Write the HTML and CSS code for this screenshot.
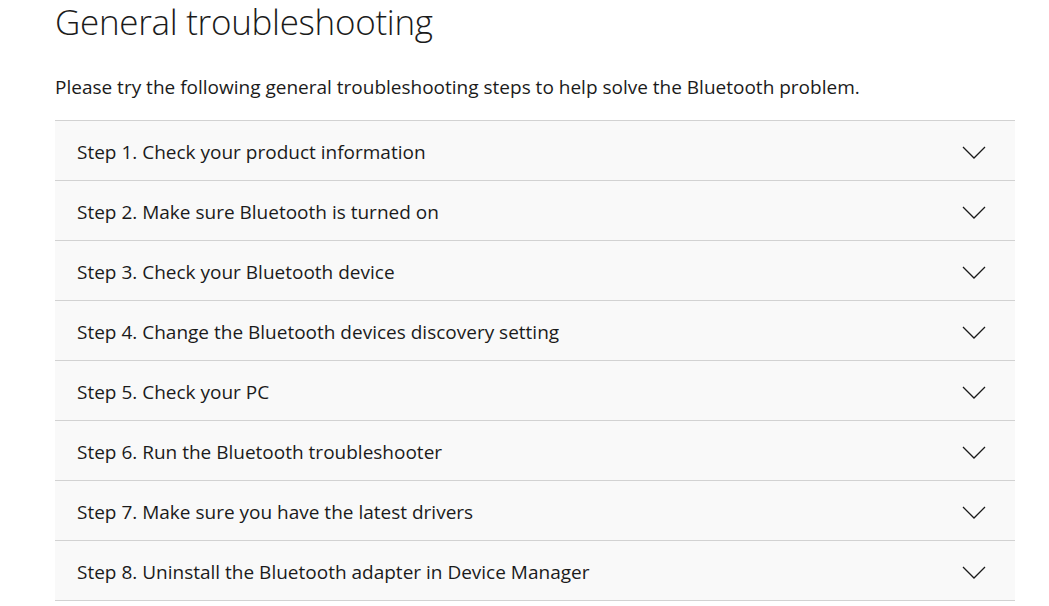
FILE: index.html
```html
<!DOCTYPE html>
<html>
<head>
<meta charset="utf-8">
<link rel="stylesheet" href="styles.css">
</head>
<body>
<main class="page">
  <h1 class="title">General troubleshooting</h1>
  <p class="intro">Please try the following general troubleshooting steps to help solve the Bluetooth problem.</p>
  <ul class="steps">
    <li class="step"><span class="label">Step 1. Check your product information</span><svg class="chev" viewBox="0 0 24 14"><path d="M1 1 L12 12 L23 1"/></svg></li>
    <li class="step"><span class="label">Step 2. Make sure Bluetooth is turned on</span><svg class="chev" viewBox="0 0 24 14"><path d="M1 1 L12 12 L23 1"/></svg></li>
    <li class="step"><span class="label">Step 3. Check your Bluetooth device</span><svg class="chev" viewBox="0 0 24 14"><path d="M1 1 L12 12 L23 1"/></svg></li>
    <li class="step"><span class="label">Step 4. Change the Bluetooth devices discovery setting</span><svg class="chev" viewBox="0 0 24 14"><path d="M1 1 L12 12 L23 1"/></svg></li>
    <li class="step"><span class="label">Step 5. Check your PC</span><svg class="chev" viewBox="0 0 24 14"><path d="M1 1 L12 12 L23 1"/></svg></li>
    <li class="step"><span class="label">Step 6. Run the Bluetooth troubleshooter</span><svg class="chev" viewBox="0 0 24 14"><path d="M1 1 L12 12 L23 1"/></svg></li>
    <li class="step"><span class="label">Step 7. Make sure you have the latest drivers</span><svg class="chev" viewBox="0 0 24 14"><path d="M1 1 L12 12 L23 1"/></svg></li>
    <li class="step"><span class="label">Step 8. Uninstall the Bluetooth adapter in Device Manager</span><svg class="chev" viewBox="0 0 24 14"><path d="M1 1 L12 12 L23 1"/></svg></li>
  </ul>
</main>
</body>
</html>
```
FILE: styles.css
```css
html, body {
  margin: 0;
  padding: 0;
  background: #fff;
}
.page {
  width: 960px;
  margin-left: 55px;
  color: #1b1b1b;
  font-family: "Open Sans", "Noto Sans", sans-serif;
}
.title {
  margin: 0;
  font-weight: 300;
  font-size: 35px;
  line-height: 44px;
  letter-spacing: -0.3px;
}
.intro {
  margin: 30px 0 0;
  font-size: 19px;
  line-height: 26px;
}
.steps {
  list-style: none;
  margin: 20px 0 0;
  padding: 0;
  border-top: 1px solid #d2d2d2;
}
.step {
  height: 59px;
  border-bottom: 1px solid #d2d2d2;
  background: #f9f9f9;
  display: flex;
  align-items: center;
  justify-content: space-between;
  padding: 0 29px 0 22px;
  font-size: 19px;
}
.label {
  padding-top: 2px;
}
.chev {
  width: 24px;
  height: 14px;
  margin-top: 4px;
  fill: none;
  stroke: #1b1b1b;
  stroke-width: 1.3;
}
```
